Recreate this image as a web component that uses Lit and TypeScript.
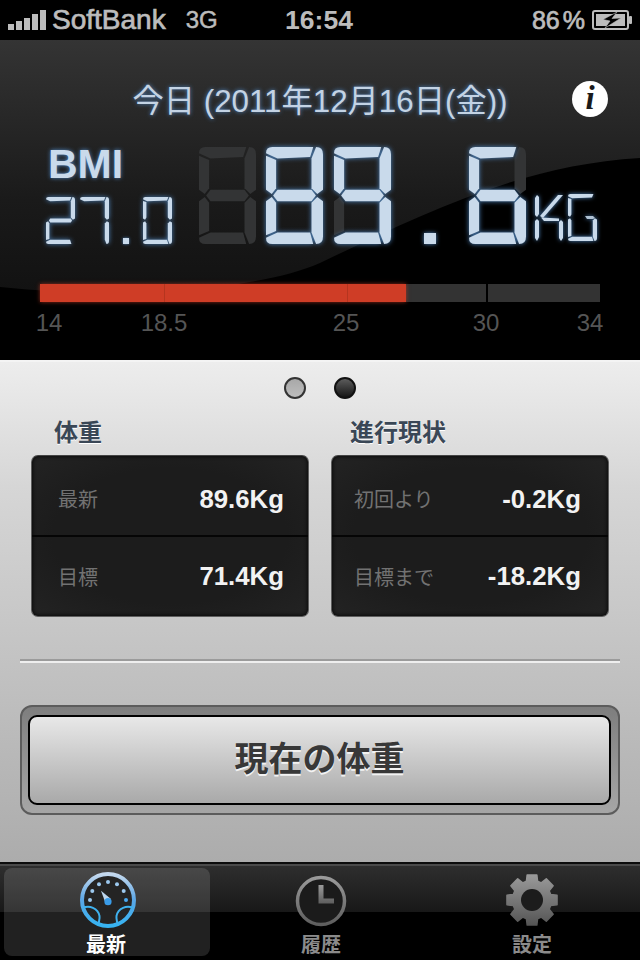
import { LitElement, html, css, svg } from "lit";
import { customElement, property } from "lit/decorators.js";

type Seg = "t" | "ul" | "ur" | "m" | "ll" | "lr" | "b";
const ALL: Seg[] = ["t", "ul", "ur", "m", "ll", "lr", "b"];
const MAP: Record<string, Seg[]> = {
  "0": ["t", "ul", "ur", "ll", "lr", "b"],
  "2": ["t", "ur", "m", "ll", "b"],
  "6": ["t", "ul", "m", "ll", "lr", "b"],
  "7": ["t", "ur", "lr"],
  "8": ALL,
  "9": ["t", "ul", "ur", "m", "lr", "b"],
  " ": [],
};

function segPaths(W: number, H: number, T: number): Record<Seg, string> {
  const g = Math.max(0.8, T * 0.12);
  const c = T * 0.55;
  const my = H / 2;
  const hT = T / 2;
  const r = W - T;
  return {
    t: `M0 ${c}Q0 0 ${c} 0L${W - T * 0.85} 0L${r - g} ${T - g}L${T} ${T}Z`,
    ur: `M${W - T * 0.6} 0Q${W} 0 ${W} ${c + 1}L${W} ${my - hT}L${W - hT} ${my - g}L${r} ${my - hT - g}L${r} ${T}Z`,
    ul: `M0 ${c + g + 1}L${T - g} ${T + g}L${T - g} ${my - hT - g}L${hT} ${my - g}L0 ${my - hT}Z`,
    m: `M${hT + g} ${my}L${T} ${my - hT}L${r} ${my - hT}L${W - hT - g} ${my}L${r} ${my + hT}L${T} ${my + hT}Z`,
    ll: `M0 ${my + hT}L${hT} ${my + g}L${T - g} ${my + hT + g}L${T - g} ${H - T - g}L0 ${H - c - g - 1}Z`,
    lr: `M${W} ${my + hT}L${W} ${H - c - 1}Q${W} ${H} ${W - T * 0.6} ${H}L${r} ${H - T}L${r} ${my + hT + g}L${W - hT} ${my + g}Z`,
    b: `M0 ${H - c}L${T} ${H - T}L${r - g} ${H - T}L${W - T * 0.85} ${H}L${c} ${H}Q0 ${H} 0 ${H - c}Z`,
  };
}

const gearPath = (() => {
  const cx = 30, cy = 30, n = 8, R = 25.5, B = 19.5;
  let p = "";
  for (let i = 0; i < n; i++) {
    const a = (i / n) * Math.PI * 2;
    const w1 = 0.29, w2 = 0.19;
    const pts: [number, number][] = [
      [B, a - w1],
      [R, a - w2],
      [R, a + w2],
      [B, a + w1],
    ];
    pts.forEach(([rad, an], j) => {
      const x = (cx + rad * Math.sin(an)).toFixed(2);
      const y = (cy - rad * Math.cos(an)).toFixed(2);
      p += `${i === 0 && j === 0 ? "M" : "L"}${x} ${y}`;
    });
  }
  return p + "Z";
})();

@customElement("lcd-digit")
class LcdDigit extends LitElement {
  static styles = css`
    :host { display: block; line-height: 0; }
    svg { display: block; overflow: visible; }
    .lit { fill: #c9daeb; filter: drop-shadow(0 0 2.5px #4f86c0); }
    .off { fill: #333435; }
  `;
  @property() char = "8";
  @property({ type: Number }) w = 57;
  @property({ type: Number }) h = 97;
  @property({ type: Number }) t = 11;
  @property({ type: Boolean }) ghost = false;
  render() {
    const p = segPaths(this.w, this.h, this.t);
    const on = MAP[this.char] ?? [];
    const off = ALL.filter((s) => !on.includes(s));
    return html`<svg width=${this.w} height=${this.h} viewBox="0 0 ${this.w} ${this.h}" aria-hidden="true">
      ${this.ghost ? svg`<g class="off">${off.map((s) => svg`<path d=${p[s]}></path>`)}</g>` : ""}
      <g class="lit">${on.map((s) => svg`<path d=${p[s]}></path>`)}</g>
    </svg>`;
  }
}

@customElement("app-root")
class AppRoot extends LitElement {
  static styles = css`
    :host {
      display: flex;
      flex-direction: column;
      width: 640px;
      height: 960px;
      overflow: hidden;
      background: #000;
      font-family: "Liberation Sans", "Noto Sans CJK JP", sans-serif;
    }
    .status {
      height: 40px;
      background: #000;
      color: #bcbcbc;
      display: grid;
      grid-template-columns: 1fr auto 1fr;
      align-items: center;
      padding: 0 7px 0 8px;
      font-size: 28px;
      flex: none;
    }
    .st-left, .st-right { display: flex; align-items: center; }
    .st-right { justify-content: flex-end; }
    .signal { display: flex; align-items: flex-end; gap: 2px; height: 20px; margin-right: 6px; }
    .signal i { display: block; width: 6px; background: #bcbcbc; }
    .carrier { -webkit-text-stroke: 0.7px #bcbcbc; }
    .net { margin-left: 20px; font-size: 24px; -webkit-text-stroke: 0.5px #bcbcbc; }
    .time { font-weight: 700; font-size: 26.5px; margin-right: 3px; }
    .pct { font-size: 25px; margin-right: 7px; -webkit-text-stroke: 0.7px #bcbcbc; }
    .pct span { margin-left: 3px; }

    .head {
      position: relative;
      height: 320px;
      flex: none;
      background: linear-gradient(#343434 0%, #1a1a1a 50%, #0c0c0c 100%);
      overflow: hidden;
    }
    .swoosh { position: absolute; inset: 0; display: block; }
    .head-body { position: relative; display: flex; flex-direction: column; height: 100%; }
    .date-row {
      display: grid;
      grid-template-columns: 1fr auto 1fr;
      align-items: center;
      margin-top: 36px;
      height: 38px;
    }
    .date {
      grid-column: 2;
      color: #c3d3e4;
      font-size: 31.3px;
      text-shadow: 0 0 4px #4f86c0;
      white-space: nowrap;
    }
    .info {
      grid-column: 3;
      justify-self: end;
      margin-right: 32px;
      width: 36px;
      height: 36px;
      border-radius: 50%;
      background: #fff;
      color: #1a1a1a;
      display: flex;
      align-items: center;
      justify-content: center;
      font: italic 700 33px "Liberation Serif", serif;
    }
    .readout { display: flex; margin-top: 33px; padding-left: 46px; height: 97px; }
    .bmi-col { width: 127px; margin-right: 26px; display: flex; flex-direction: column; }
    .bmi {
      font-size: 41px;
      font-weight: 700;
      line-height: 30px;
      height: 48px;
      margin-left: 2px;
      margin-top: 2px;
      color: #c9daeb;
      text-shadow: 0 0 4px #4f86c0;
    }
    .lcd { display: flex; }
    .small-dot { width: 6px; height: 6px; margin: 41px 14px 0 14px; background: #c9daeb; box-shadow: 0 0 3px #4f86c0; }
    .big { display: flex; gap: 10px; }
    .big .d3 { margin-left: 1px; }
    .big-dot { width: 12px; height: 11px; margin: 86px 33px 0 33px; background: #c9daeb; box-shadow: 0 0 4px #4f86c0; }
    .unit { display: flex; gap: 4px; margin: 47px 0 0 9px; }
    .unit svg { display: block; overflow: visible; }
    .unit .lit { fill: #c9daeb; filter: drop-shadow(0 0 2px #4f86c0); }
    .scale { margin: 40px 40px 0; }
    .track {
      position: relative;
      height: 18px;
      background: #333;
    }
    .fill {
      position: absolute;
      left: 0; top: 0; bottom: 0;
      background: #cf3d26;
      box-shadow: 0 0 4px rgba(207, 61, 38, 0.7);
    }
    .tick { position: absolute; top: 0; bottom: 0; width: 2px; background: #000; }
    .tick.red { background: #b5351f; width: 1px; }
    .labels { position: relative; height: 32px; color: #555; font-size: 24px; }
    .labels span { position: absolute; top: 7px; transform: translateX(-50%); }

    .main {
      flex: 1;
      display: flex;
      flex-direction: column;
      background: linear-gradient(#ededed 0%, #d6d6d6 25%, #acacac 100%);
      border-top: 2px solid #f4f4f4;
      box-sizing: border-box;
    }
    .pager { display: flex; justify-content: center; gap: 28px; margin-top: 15px; }
    .dot {
      width: 22px;
      height: 22px;
      box-sizing: border-box;
      border-radius: 50%;
      border: 2px solid #222;
    }
    .dot.a { background: linear-gradient(#a8a8a8, #bdbdbd); border-color: #333; }
    .dot.b { background: linear-gradient(#5c5c5c, #151515); border-color: #111; }
    .cols { display: grid; grid-template-columns: 278px 278px; gap: 22px; padding: 0 31px; margin-top: 20px; }
    .title {
      height: 28px;
      line-height: 28px;
      font-size: 24px;
      font-weight: 700;
      color: #3a4756;
      text-shadow: 0 1px 0 #fff;
      margin-bottom: 8px;
    }
    .t1 { padding-left: 23px; }
    .t2 { padding-left: 19px; }
    .card {
      height: 162px;
      box-sizing: border-box;
      border-radius: 7px;
      background: radial-gradient(ellipse at center, #1c1c1c 60%, #232323 100%);
      border: 1px solid #5e5e5e;
      border-top-color: #444;
      box-shadow: inset 0 0 4px #000;
      display: flex;
      flex-direction: column;
    }
    .row { flex: 1; display: flex; align-items: center; justify-content: space-between; }
    .row.one {
      flex: none;
      height: 81px;
      box-sizing: border-box;
      border-bottom: 2px solid #050505;
      padding-top: 8px;
    }
    .row.one .lbl { position: relative; top: -1px; }
    .c1 .row { padding-left: 26px; padding-right: 24px; }
    .c2 .row { padding-left: 22px; padding-right: 27px; }
    .lbl { color: #727272; font-size: 20px; }
    .val { color: #f2f2f2; font-size: 25.8px; font-weight: 700; }
    .rule {
      margin: 42px 20px 0;
      height: 2px;
      background: #9b9b9b;
      border-bottom: 2px solid #eee;
      flex: none;
    }
    .cta-wrap {
      margin: 42px 20px 0;
      height: 110px;
      box-sizing: border-box;
      border: 2px solid #5c5c5c;
      border-radius: 12px;
      background: linear-gradient(#7e7e7e, #a6a6a6);
      padding: 8px 7px 8px 6px;
    }
    .cta {
      height: 100%;
      box-sizing: border-box;
      border: 2px solid #000;
      border-radius: 9px;
      background: linear-gradient(#e8e8e8, #a9a9a9);
      display: flex;
      align-items: center;
      justify-content: center;
      padding-bottom: 8px;
      font-size: 34px;
      font-weight: 700;
      color: #383838;
      text-shadow: 0 2px 0 #f2f2f2;
    }

    .tabs {
      position: relative;
      height: 98px;
      flex: none;
      box-sizing: border-box;
      border-top: 2px solid #0c0c0c;
      display: grid;
      grid-template-columns: 214px 212px 212px;
      background: linear-gradient(#2f2f2f 0, #181818 48px, #000 48px);
      box-shadow: inset 0 2px 0 #4a4a4a;
    }
    .tab {
      display: flex;
      flex-direction: column;
      align-items: center;
      color: #8b8b8b;
      font-size: 20px;
      font-weight: 700;
      padding-top: 6px;
      box-sizing: border-box;
    }
    .tab svg { display: block; height: 60px; }
    .tab span { line-height: 24px; margin-top: 3px; }
    .tab.on { color: #fff; position: relative; }
    .tab.on::before {
      content: "";
      position: absolute;
      left: 4px; top: 4px; width: 206px; height: 88px;
      border-radius: 8px;
      background: rgba(255, 255, 255, 0.13);
    }
    .tab.on > * { position: relative; }
    .tab.on svg { margin-left: 2px; }
    .tab.on span { margin-right: 2px; }
    .tab.mid svg { margin-left: 2px; }
    .tab.mid span { margin-left: 2px; }
  `;

  private small(ch: string) {
    return html`<lcd-digit char=${ch} .w=${29} .h=${47} .t=${4.2}></lcd-digit>`;
  }
  private big(ch: string, cls = "") {
    return html`<lcd-digit class=${cls} char=${ch} .w=${57} .h=${97} .t=${11.5} ghost></lcd-digit>`;
  }

  render() {
    const scale = [
      ["14", 9],
      ["18.5", 124],
      ["25", 306],
      ["30", 446],
      ["34", 550],
    ] as const;
    const g = segPaths(29, 47, 4.2);
    return html`
      <div class="status">
        <div class="st-left">
          <div class="signal">
            ${[6, 9, 12, 16, 20].map((h) => html`<i style="height:${h}px"></i>`)}
          </div>
          <span class="carrier">SoftBank</span>
          <span class="net">3G</span>
        </div>
        <div class="time">16:54</div>
        <div class="st-right">
          <span class="pct">86<span>%</span></span>
          <svg width="41" height="20" viewBox="0 0 41 20" aria-hidden="true">
            <rect x="1" y="1" width="35" height="18" rx="2" fill="none" stroke="#bcbcbc" stroke-width="2"></rect>
            <rect x="4" y="4" width="29" height="12" fill="#bcbcbc"></rect>
            <rect x="37" y="6" width="3" height="8" rx="1" fill="#bcbcbc"></rect>
            <path d="M11 9.5 L25 2 L20 8.5 L29 8 L13 18 L18 11 Z" fill="#000" stroke="#bcbcbc" stroke-width="0.6"></path>
          </svg>
        </div>
      </div>

      <section class="head">
        <svg class="swoosh" width="640" height="320" viewBox="0 0 640 320" aria-hidden="true">
          <path d="M0 247C120 260 260 250 320 223C420 175 520 125 640 118L640 320L0 320Z" fill="#000"></path>
        </svg>
        <div class="head-body">
          <div class="date-row">
            <div class="date">今日 (2011年12月16日(金))</div>
            <div class="info">i</div>
          </div>
          <div class="readout">
            <div class="bmi-col">
              <div class="bmi">BMI</div>
              <div class="lcd" role="img" aria-label="27.0">
                ${this.small("2")}
                <div style="width:5px"></div>
                ${this.small("7")}
                <div class="small-dot"></div>
                ${this.small("0")}
              </div>
            </div>
            <div class="big" role="img" aria-label="89.6 KG">
              ${this.big(" ")}
              ${this.big("8")}
              ${this.big("9", "d3")}
            </div>
            <div class="big-dot"></div>
            ${this.big("6")}
            <div class="unit" role="img" aria-label="KG">
              <svg width="29" height="47" viewBox="0 0 29 47" aria-hidden="true">
                <g class="lit">
                  <path d="M0 4L2 1L4 3L4 20L2 23L0 21Z"></path>
                  <path d="M0 27L2 25L4 27L4 43L2 47L0 44Z"></path>
                  <path d="M5 22L23 1L28 1L8 24Z"></path>
                  <path d="M6 23.5L24 24.5L24 27L9 27Z"></path>
                  <path d="M24 28L26 26L28 28L28 44L26 47L24 44Z"></path>
                </g>
              </svg>
              <svg width="29" height="47" viewBox="0 0 29 47" aria-hidden="true">
                <g class="lit">
                  <path d=${g.t}></path>
                  <path d=${g.ul}></path>
                  <path d=${g.ll}></path>
                  <path d=${g.b}></path>
                  <path d=${g.lr}></path>
                  <path d="M17 22L25 22L27 24L25 25L19 25Z" opacity="0.85"></path>
                </g>
              </svg>
            </div>
          </div>
          <div class="scale">
            <div class="track">
              <div class="fill" style="width:366px"></div>
              <div class="tick red" style="left:124px"></div>
              <div class="tick red" style="left:307px"></div>
              <div class="tick" style="left:446px"></div>
            </div>
            <div class="labels">
              ${scale.map(([t, x]) => html`<span style="left:${x}px">${t}</span>`)}
            </div>
          </div>
        </div>
      </section>

      <main class="main">
        <div class="pager"><div class="dot a"></div><div class="dot b"></div></div>
        <div class="cols">
          <div>
            <div class="title t1">体重</div>
            <div class="card c1">
              <div class="row one"><span class="lbl">最新</span><span class="val">89.6Kg</span></div>
              <div class="row"><span class="lbl">目標</span><span class="val">71.4Kg</span></div>
            </div>
          </div>
          <div>
            <div class="title t2">進行現状</div>
            <div class="card c2">
              <div class="row one"><span class="lbl">初回より</span><span class="val">-0.2Kg</span></div>
              <div class="row"><span class="lbl">目標まで</span><span class="val">-18.2Kg</span></div>
            </div>
          </div>
        </div>
        <div class="rule"></div>
        <div class="cta-wrap"><div class="cta">現在の体重</div></div>
      </main>

      <nav class="tabs">
        <div class="tab on">
          <svg width="60" height="60" viewBox="0 0 60 60" aria-hidden="true">
            <defs>
              <linearGradient id="gr" x1="0" y1="0" x2="0" y2="1">
                <stop offset="0" stop-color="#c5d9ee"></stop>
                <stop offset="0.5" stop-color="#5aa6e6"></stop>
                <stop offset="1" stop-color="#36b4f2"></stop>
              </linearGradient>
            </defs>
            <circle cx="30" cy="30" r="26" fill="#242424" stroke="url(#gr)" stroke-width="4"></circle>
            <path d="M5 38C11 35 20 38 21.5 46C22 49 21 51 20.5 54M55 38C49 35 40 38 38.5 46C38 49 39 51 39.5 54" fill="none" stroke="#3fb2ef" stroke-width="2"></path>
            ${[[12, 30], [14.3, 21], [21, 14.3], [30, 12], [39, 14.3], [45.7, 21], [48, 30]].map(
              ([x, y], i) => svg`<circle cx=${x} cy=${y} r="2" fill=${i === 6 ? "#4aa8f0" : "#9cc8ee"}></circle>`
            )}
            <path d="M23 20.7L33 29L27.5 33Z" fill="#bcd6ee"></path>
            <circle cx="30" cy="31.7" r="3.6" fill="#3a9ce8"></circle>
          </svg>
          <span>最新</span>
        </div>
        <div class="tab mid">
          <svg width="60" height="60" viewBox="0 0 60 60" aria-hidden="true">
            <defs>
              <linearGradient id="gk" x1="0" y1="0" x2="0" y2="1">
                <stop offset="0" stop-color="#9a9a9a"></stop>
                <stop offset="1" stop-color="#5e5e5e"></stop>
              </linearGradient>
            </defs>
            <circle cx="30" cy="31" r="23.5" fill="#1b1b1b" stroke="url(#gk)" stroke-width="3.5"></circle>
            <path d="M27.5 15H32.5V28.5H43V33.5H27.5Z" fill="url(#gk)"></path>
          </svg>
          <span>履歴</span>
        </div>
        <div class="tab last">
          <svg width="60" height="60" viewBox="0 0 60 60" aria-hidden="true">
            <defs>
              <linearGradient id="gg" x1="0" y1="0" x2="0" y2="1">
                <stop offset="0" stop-color="#9a9a9a"></stop>
                <stop offset="1" stop-color="#555"></stop>
              </linearGradient>
            </defs>
            <path d=${gearPath} fill="url(#gg)" stroke="url(#gg)" stroke-width="1.5" stroke-linejoin="round"></path>
            <circle cx="30" cy="30" r="11" fill="#1c1c1c"></circle>
          </svg>
          <span>設定</span>
        </div>
      </nav>
    `;
  }
}
